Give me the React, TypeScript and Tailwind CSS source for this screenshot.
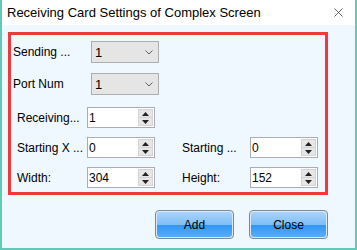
import { X } from 'lucide-react';

function Combo({ value }: { value: string }) {
    return (
        <div className="w-[68px] h-[22px] border border-[#adadad] bg-[#e5e5e5] flex items-center justify-between pl-[3px] pr-[5px]">
            <span className="text-[13px] text-black leading-none">{value}</span>
            <svg width="8" height="5" viewBox="0 0 8 5">
                <polyline points="0.5,0.5 4,4 7.5,0.5" fill="none" stroke="#606060" strokeWidth="1" />
            </svg>
        </div>
    );
}

function Spin({ value }: { value: string }) {
    return (
        <div className="w-[68px] h-[21px] border border-[#abadb3] bg-white flex items-center">
            <span className="flex-1 pl-[1px] text-[12px] text-black leading-none">{value}</span>
            <div className="w-[16px] h-full py-[1px] pr-[1px] flex flex-col">
                <div className="flex-1 bg-[#e6e6e6] border border-[#d4d4d4] flex items-center justify-center">
                    <svg width="7" height="4" viewBox="0 0 7 4"><polygon points="0,4 3.5,0 7,4" fill="#222" /></svg>
                </div>
                <div className="flex-1 bg-[#e6e6e6] border border-t-0 border-[#d4d4d4] flex items-center justify-center">
                    <svg width="7" height="4" viewBox="0 0 7 4"><polygon points="0,0 7,0 3.5,4" fill="#222" /></svg>
                </div>
            </div>
        </div>
    );
}

function DialogButton({ label }: { label: string }) {
    return (
        <button className="w-[79px] h-[29px] rounded-[4px] border border-[#7a8797] p-[1px] bg-[#dbe9f7]">
            <div className="w-full h-full rounded-[3px] flex flex-col overflow-hidden relative">
                <div className="flex-1 bg-gradient-to-b from-[#a9d3fa] to-[#7dbdf7]" />
                <div className="flex-1 bg-gradient-to-b from-[#2f95f5] to-[#59acf6]" />
                <span className="absolute inset-0 flex items-center justify-center text-[12px] text-black">{label}</span>
            </div>
        </button>
    );
}

export default function App() {
    return (
        <div className="w-[357px] h-[250px] bg-[#eff7ff] border-x-2 border-b-2 border-[#62c9b8] flex flex-col overflow-hidden" style={{ fontFamily: '"Liberation Sans", Arial, sans-serif' }}>
            {/* Title bar */}
            <div className="h-[25px] bg-white flex items-center justify-between pl-[5px] pr-[8px] shrink-0">
                <span className="text-[13px] text-black">
                    Receiving Card Settings of Complex Screen
                </span>
                <X size={15} strokeWidth={1.1} className="text-[#222] mr-[1px]" />
            </div>

            {/* Content */}
            <div className="flex-1 pl-[6px] pt-[7px]">
                <div className="w-[320px] h-[163px] border-[3px] border-[#f03a3a] pt-[6px] text-[12px] text-black">
                    <div className="flex items-center pl-[2px]">
                        <span className="w-[78px]">Sending ...</span>
                        <Combo value="1" />
                    </div>
                    <div className="flex items-center pl-[2px] mt-[10px]">
                        <span className="w-[78px]">Port Num</span>
                        <Combo value="1" />
                    </div>
                    <div className="flex items-center pl-[6px] mt-[12px]">
                        <span className="w-[70px]">Receiving...</span>
                        <Spin value="1" />
                    </div>
                    <div className="flex items-center pl-[6px] mt-[9px]">
                        <span className="w-[70px]">Starting X ...</span>
                        <Spin value="0" />
                        <span className="w-[68px] ml-[27px]">Starting ...</span>
                        <Spin value="0" />
                    </div>
                    <div className="flex items-center pl-[6px] mt-[9px]">
                        <span className="w-[70px]">Width:</span>
                        <Spin value="304" />
                        <span className="w-[68px] ml-[27px]">Height:</span>
                        <Spin value="152" />
                    </div>
                </div>

                <div className="flex justify-end gap-[15px] pr-[27px] mt-[15px]">
                    <DialogButton label="Add" />
                    <DialogButton label="Close" />
                </div>
            </div>
        </div>
    );
}
